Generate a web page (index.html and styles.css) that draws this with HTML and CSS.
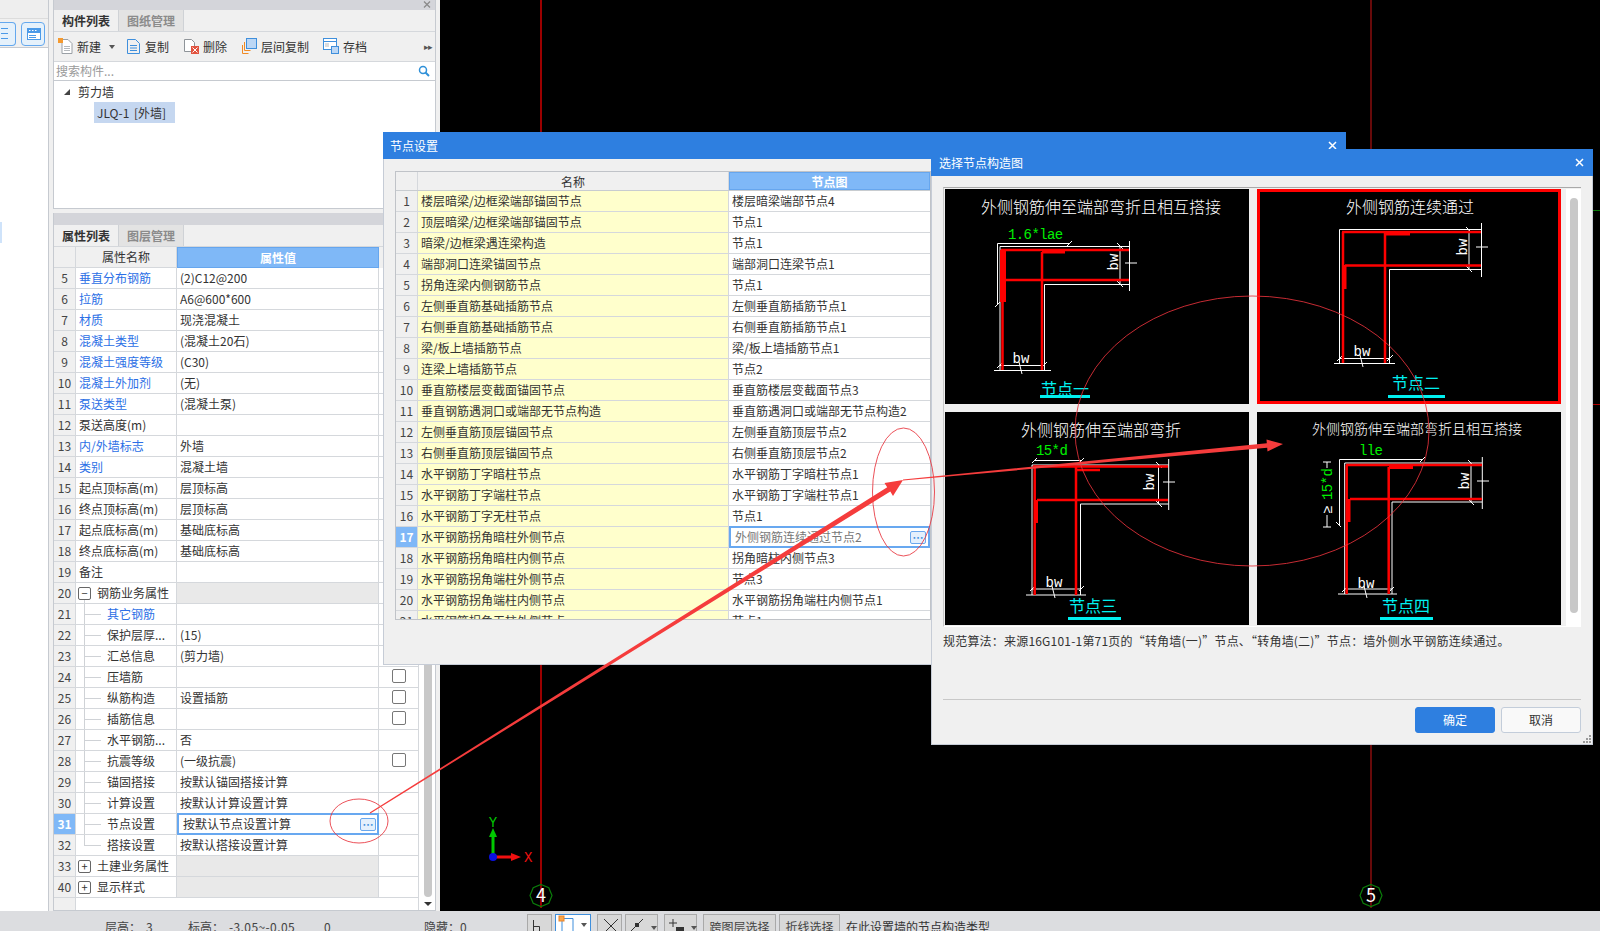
FILE: index.html
```html
<!DOCTYPE html>
<html lang="zh-CN">
<head>
<meta charset="utf-8">
<title>节点设置</title>
<link rel="stylesheet" href="styles.css">
</head>
<body>
<div class="app">
  <div class="main">
    <aside class="strip">
      <div class="strip-top"></div>
      <div class="strip-tools">
        <span class="sbtn sbtn-cut"><svg width="15" height="24" viewBox="0 0 15 24"><path class="ic-b" d="M1 5.500h7M1 10.500h7M1 15.500h7"/></svg></span>
        <span class="sbtn"><svg width="24" height="24" viewBox="0 0 24 24"><rect class="ic-fb" x="5" y="5" width="14" height="12"/><rect class="ic-fw" x="6" y="10" width="12" height="6"/><path class="ic-w" d="M7 7.500h1.500M10 7.500h1.500M13 7.500h1.500"/><path class="ic-b" d="M7 12.500h7M7 14.500h7"/></svg></span>
      </div>
      <div class="strip-body"><span class="strip-mark"></span></div>
    </aside>

    <div class="side">
      <section class="panel panel-a">
        <div class="ptitle"><svg class="pclose" width="8" height="7" viewBox="0 0 8 7"><path d="M1 0.500l6 6M7 0.500l-6 6"/></svg></div>
        <div class="tabs"><span class="tab on">构件列表</span><span class="tab">图纸管理</span></div>
        <div class="tools">
          <span class="tool t-new"><svg width="15" height="16" viewBox="0 0 15 16"><path class="ic-doc" d="M4 1.500h6l4 4v10H4z"/><path class="ic-line" d="M6 8.500h6M6 10.500h6M6 12.500h6"/><rect class="ic-or" x="0" y="0" width="5" height="5"/></svg><b>新建</b><i class="caret"></i></span>
          <span class="tool t-copy"><svg width="13" height="16" viewBox="0 0 13 16"><path class="ic-docb" d="M0.500 1.500h8l4 4v10H0.500z"/><path class="ic-docb" d="M3 7.500h7M3 10h7M3 12.500h7"/></svg><b>复制</b></span>
          <span class="tool t-del"><svg width="15" height="16" viewBox="0 0 15 16"><path class="ic-docg" d="M0.500 1.500h7l3 3v9H0.500z"/><rect class="ic-red" x="7" y="8" width="8" height="8"/><path class="ic-w" d="M8.500 9.500l5 5M13.500 9.500l-5 5"/></svg><b>删除</b></span>
          <span class="tool t-lay"><svg width="15" height="16" viewBox="0 0 15 16"><rect class="ic-sq" x="4.500" y="0.500" width="10" height="10"/><path class="ic-orl" d="M2.500 4v8.500h6M0.500 7v8.500h6"/></svg><b>层间复制</b></span>
          <span class="tool t-save"><svg width="16" height="16" viewBox="0 0 16 16"><rect class="ic-win" x="0.500" y="0.500" width="13" height="11"/><path class="ic-docb" d="M0.500 3.500h13"/><rect class="ic-sq" x="8.500" y="8.500" width="7" height="7"/><path class="ic-line" d="M2 6h4M2 8h4"/></svg><b>存档</b></span>
          <span class="more">&#9656;&#9656;</span>
        </div>
        <div class="search"><span class="ph">搜索构件...</span><svg width="12" height="12" viewBox="0 0 12 12"><circle class="ic-mag" cx="5" cy="5" r="3.500"/><path class="ic-mag2" d="M7.500 7.500l3.500 3.500"/></svg></div>
        <div class="tree">
          <div class="tree-head"><i class="tri"></i>剪力墙</div>
          <div class="tree-sel">JLQ-1 [外墙]</div>
        </div>
      </section>

      <section class="panel panel-b">
        <div class="ptitle"></div>
        <div class="tabs"><span class="tab on">属性列表</span><span class="tab">图层管理</span></div>
        <div class="pbody">
          <div class="pgrid">
            <div class="phead"><span class="n"></span><span class="k">属性名称</span><span class="v">属性值</span></div>
            <div class="prow"><span class="n">5</span><span class="k link">垂直分布钢筋</span><span class="v">(2)C12@200</span><span class="c"></span></div>
            <div class="prow"><span class="n">6</span><span class="k link">拉筋</span><span class="v">A6@600*600</span><span class="c"></span></div>
            <div class="prow"><span class="n">7</span><span class="k link">材质</span><span class="v">现浇混凝土</span><span class="c"></span></div>
            <div class="prow"><span class="n">8</span><span class="k link">混凝土类型</span><span class="v">(混凝土20石)</span><span class="c"></span></div>
            <div class="prow"><span class="n">9</span><span class="k link">混凝土强度等级</span><span class="v">(C30)</span><span class="c"></span></div>
            <div class="prow"><span class="n">10</span><span class="k link">混凝土外加剂</span><span class="v">(无)</span><span class="c"></span></div>
            <div class="prow"><span class="n">11</span><span class="k link">泵送类型</span><span class="v">(混凝土泵)</span><span class="c"></span></div>
            <div class="prow"><span class="n">12</span><span class="k">泵送高度(m)</span><span class="v"></span><span class="c"></span></div>
            <div class="prow"><span class="n">13</span><span class="k link">内/外墙标志</span><span class="v">外墙</span><span class="c"></span></div>
            <div class="prow"><span class="n">14</span><span class="k link">类别</span><span class="v">混凝土墙</span><span class="c"></span></div>
            <div class="prow"><span class="n">15</span><span class="k">起点顶标高(m)</span><span class="v">层顶标高</span><span class="c"></span></div>
            <div class="prow"><span class="n">16</span><span class="k">终点顶标高(m)</span><span class="v">层顶标高</span><span class="c"></span></div>
            <div class="prow"><span class="n">17</span><span class="k">起点底标高(m)</span><span class="v">基础底标高</span><span class="c"></span></div>
            <div class="prow"><span class="n">18</span><span class="k">终点底标高(m)</span><span class="v">基础底标高</span><span class="c"></span></div>
            <div class="prow"><span class="n">19</span><span class="k">备注</span><span class="v"></span><span class="c"></span></div>
            <div class="prow"><span class="n">20</span><span class="k grp grp-open"><i class="box">&#8722;</i>钢筋业务属性</span><span class="v gv"></span><span class="c"></span></div>
            <div class="prow"><span class="n">21</span><span class="k tr link">其它钢筋</span><span class="v"></span><span class="c"></span></div>
            <div class="prow"><span class="n">22</span><span class="k tr">保护层厚...</span><span class="v">(15)</span><span class="c"></span></div>
            <div class="prow"><span class="n">23</span><span class="k tr">汇总信息</span><span class="v">(剪力墙)</span><span class="c"></span></div>
            <div class="prow"><span class="n">24</span><span class="k tr">压墙筋</span><span class="v"></span><span class="c"><i class="cb"></i></span></div>
            <div class="prow"><span class="n">25</span><span class="k tr">纵筋构造</span><span class="v">设置插筋</span><span class="c"><i class="cb"></i></span></div>
            <div class="prow"><span class="n">26</span><span class="k tr">插筋信息</span><span class="v"></span><span class="c"><i class="cb"></i></span></div>
            <div class="prow"><span class="n">27</span><span class="k tr">水平钢筋...</span><span class="v">否</span><span class="c"></span></div>
            <div class="prow"><span class="n">28</span><span class="k tr">抗震等级</span><span class="v">(一级抗震)</span><span class="c"><i class="cb"></i></span></div>
            <div class="prow"><span class="n">29</span><span class="k tr">锚固搭接</span><span class="v">按默认锚固搭接计算</span><span class="c"></span></div>
            <div class="prow"><span class="n">30</span><span class="k tr">计算设置</span><span class="v">按默认计算设置计算</span><span class="c"></span></div>
            <div class="prow"><span class="n on">31</span><span class="k tr">节点设置</span><span class="v edit"><em>按默认节点设置计算</em><i class="dots">&#8943;</i></span><span class="c"></span></div>
            <div class="prow"><span class="n">32</span><span class="k tr tr-end">搭接设置</span><span class="v">按默认搭接设置计算</span><span class="c"></span></div>
            <div class="prow"><span class="n">33</span><span class="k grp"><i class="box">+</i>土建业务属性</span><span class="v gv"></span><span class="c"></span></div>
            <div class="prow"><span class="n">40</span><span class="k grp"><i class="box">+</i>显示样式</span><span class="v gv"></span><span class="c"></span></div>
            <div class="pfill"><span class="n"></span></div>
          </div>
          <div class="pscroll"><span class="thumb"></span><i class="down"></i></div>
        </div>
      </section>
    </div>

    <div class="canvas">
      <svg class="cad" viewBox="440 0 1160 911">
        <path class="ax" d="M541 0V908"/>
        <path class="ax2" d="M1371 0V908"/>
        <path class="frag-g" d="M1593 210.500H1600"/>
        <path class="frag-r" d="M1593 404.500H1600"/>
        <path class="bub" d="M541 884.500l7.800 3.200 3.200 7.800-3.200 7.800-7.800 3.200-7.800-3.200-3.200-7.800 3.200-7.800z"/>
        <path class="bub" d="M1371 884.500l7.800 3.200 3.200 7.800-3.200 7.800-7.800 3.200-7.800-3.200-3.200-7.800 3.200-7.800z"/>
        <text class="bubt" x="541" y="902">4</text>
        <text class="bubt" x="1371" y="902">5</text>
        <path class="yaxis" d="M493 857V836"/>
        <path class="yhead" d="M493 828l-4 9h8z"/>
        <path class="xaxis" d="M493 857H512"/>
        <path class="xhead" d="M521 857l-10-4v8z"/>
        <circle class="org" cx="493" cy="857" r="4"/>
        <text class="yt" x="493" y="827">Y</text>
        <text class="xt" x="524" y="862">X</text>
      </svg>
    </div>
  </div>

  <footer class="status">
    <span class="s1">层高：</span><span class="s2">3</span><span class="s1">标高：</span><span class="s3">-3.05~-0.05</span><span class="s4">0</span><span class="s5">隐藏：0</span>
    <span class="sb sb1"><svg width="10" height="16" viewBox="0 0 10 16"><path class="ic-k" d="M1.500 2v12M1.500 8.500h6V14"/></svg></span>
    <span class="sb sb2"><svg width="16" height="17" viewBox="0 0 16 17"><path class="ic-docb" d="M4 3.500h11V17"/><path class="ic-docb" d="M4 3.500V17"/><rect class="ic-or2" x="1" y="1" width="5" height="5"/></svg><i class="caret"></i></span>
    <span class="sb sb3"><svg width="18" height="16" viewBox="0 0 18 16"><path class="ic-k" d="M2 1l14 14M16 1L2 15"/></svg></span>
    <span class="sb sb4"><svg width="14" height="14" viewBox="0 0 14 14"><path class="ic-k" d="M1 13L13 1"/><rect class="ic-kf" x="5" y="5" width="4" height="4"/></svg><i class="caret"></i></span>
    <span class="sb sb5"><svg width="15" height="16" viewBox="0 0 15 16"><path class="ic-k" d="M4 1v8M0 5h8"/><rect class="ic-kf" x="7" y="9" width="8" height="5"/></svg><i class="caret"></i></span>
    <span class="sb sb6">跨图层选择</span>
    <span class="sb sb7">折线选择</span>
    <span class="hint">在此设置墙的节点构造类型</span>
  </footer>
</div>

<div class="dlg dlg1">
  <div class="dtitle">节点设置<svg class="dx" width="9" height="9" viewBox="0 0 9 9"><path d="M1 1l7 7M8 1L1 8"/></svg></div>
  <div class="ngrid">
    <div class="nhead"><span class="a"></span><span class="b">名称</span><span class="d">节点图</span></div>
    <div class="nrow"><span class="a">1</span><span class="b">楼层暗梁/边框梁端部锚固节点</span><span class="d">楼层暗梁端部节点4</span></div>
    <div class="nrow"><span class="a">2</span><span class="b">顶层暗梁/边框梁端部锚固节点</span><span class="d">节点1</span></div>
    <div class="nrow"><span class="a">3</span><span class="b">暗梁/边框梁遇连梁构造</span><span class="d">节点1</span></div>
    <div class="nrow"><span class="a">4</span><span class="b">端部洞口连梁锚固节点</span><span class="d">端部洞口连梁节点1</span></div>
    <div class="nrow"><span class="a">5</span><span class="b">拐角连梁内侧钢筋节点</span><span class="d">节点1</span></div>
    <div class="nrow"><span class="a">6</span><span class="b">左侧垂直筋基础插筋节点</span><span class="d">左侧垂直筋插筋节点1</span></div>
    <div class="nrow"><span class="a">7</span><span class="b">右侧垂直筋基础插筋节点</span><span class="d">右侧垂直筋插筋节点1</span></div>
    <div class="nrow"><span class="a">8</span><span class="b">梁/板上墙插筋节点</span><span class="d">梁/板上墙插筋节点1</span></div>
    <div class="nrow"><span class="a">9</span><span class="b">连梁上墙插筋节点</span><span class="d">节点2</span></div>
    <div class="nrow"><span class="a">10</span><span class="b">垂直筋楼层变截面锚固节点</span><span class="d">垂直筋楼层变截面节点3</span></div>
    <div class="nrow"><span class="a">11</span><span class="b">垂直钢筋遇洞口或端部无节点构造</span><span class="d">垂直筋遇洞口或端部无节点构造2</span></div>
    <div class="nrow"><span class="a">12</span><span class="b">左侧垂直筋顶层锚固节点</span><span class="d">左侧垂直筋顶层节点2</span></div>
    <div class="nrow"><span class="a">13</span><span class="b">右侧垂直筋顶层锚固节点</span><span class="d">右侧垂直筋顶层节点2</span></div>
    <div class="nrow"><span class="a">14</span><span class="b">水平钢筋丁字暗柱节点</span><span class="d">水平钢筋丁字暗柱节点1</span></div>
    <div class="nrow"><span class="a">15</span><span class="b">水平钢筋丁字端柱节点</span><span class="d">水平钢筋丁字端柱节点1</span></div>
    <div class="nrow"><span class="a">16</span><span class="b">水平钢筋丁字无柱节点</span><span class="d">节点1</span></div>
    <div class="nrow"><span class="a on">17</span><span class="b">水平钢筋拐角暗柱外侧节点</span><span class="d edit2"><em>外侧钢筋连续通过节点2</em><i class="dots">&#8943;</i></span></div>
    <div class="nrow"><span class="a">18</span><span class="b">水平钢筋拐角暗柱内侧节点</span><span class="d">拐角暗柱内侧节点3</span></div>
    <div class="nrow"><span class="a">19</span><span class="b">水平钢筋拐角端柱外侧节点</span><span class="d">节点3</span></div>
    <div class="nrow"><span class="a">20</span><span class="b">水平钢筋拐角端柱内侧节点</span><span class="d">水平钢筋拐角端柱内侧节点1</span></div>
    <div class="nrow"><span class="a">21</span><span class="b">水平钢筋拐角无柱外侧节点</span><span class="d">节点1</span></div>
  </div>
</div>

<div class="dlg dlg2">
  <div class="dtitle">选择节点构造图<svg class="dx" width="9" height="9" viewBox="0 0 9 9"><path d="M1 1l7 7M8 1L1 8"/></svg></div>
  <div class="dbody">
    <div class="gallery">
      <div class="cells">
        <div class="cell">
          <svg class="dwg" viewBox="945 189 304 215">
            <text class="ti" x="1101" y="213">外侧钢筋伸至端部弯折且相互搭接</text>
            <text class="gr" x="1008" y="239">1.6*lae</text>
            <path class="wl" d="M997.500 305V243.500H1070M1000 370V246.500H1129M1129 284.500H1044.500V370M994 370.500H1051M1000 365.500H1044M1120 246V284M1129.500 241V291M1067 246l5-5M995 307l5-5M997 368l5-5M1041 368l6-6M1117 243l6 6M1117 281l6 6M1019 362l3 12M1125 263h12"/>
            <path class="rd" d="M1001 250H1129M1005 280H1129M1002.500 250V370M1042 252V370"/>
            <path class="rf" d="M1000 250h6v52h-6zM1042 250h23v3.500h-23z"/>
            <text class="bw" x="1021" y="363">bw</text>
            <text class="bw" transform="translate(1118 262) rotate(-90)">bw</text>
            <text class="cy" x="1065" y="395">节点一</text>
            <rect class="cyb" x="1040" y="395" width="50" height="3"/>
          </svg>
        </div>
        <div class="cell sel">
          <svg class="dwg" viewBox="1257 189 304 215">
            <text class="ti" x="1410" y="213">外侧钢筋连续通过</text>
            <path class="wl" d="M1339.500 363V229.500H1481M1481 269.500H1389.500V363M1334 363.500H1395M1340 358.500H1390M1469 230V269M1481.500 223V277M1337 361l5-5M1387 361l6-6M1466 227l6 6M1466 266l6 6M1360 355l3 12M1476 247h12"/>
            <path class="rd" d="M1342 232H1481M1345 265.500H1481M1343 232V363M1385 233V363"/>
            <path class="rf" d="M1343 265h3.500v24h-3.500zM1385 232h25v3.500h-25z"/>
            <text class="bw" x="1362" y="356">bw</text>
            <text class="bw" transform="translate(1467 247) rotate(-90)">bw</text>
            <text class="cy" x="1416" y="389">节点二</text>
            <rect class="cyb" x="1388" y="395" width="57" height="3"/>
          </svg>
        </div>
        <div class="cell">
          <svg class="dwg" viewBox="945 412 304 213">
            <text class="ti" x="1101" y="436">外侧钢筋伸至端部弯折</text>
            <text class="gr" x="1036" y="455">15*d</text>
            <path class="wl" d="M1032 595V465H1168.500M1168.500 504H1080.500V595M1034 460.500H1081M1026 595H1086M1032 589H1081M1158.500 465V504M1168.700 459V510M1032 463l5-5M1079 463l5-5M1030 591l5-5M1079 591l5-5M1156 462l6 6M1156 501l6 6M1052 586l3 12M1163 482h12"/>
            <path class="rd" d="M1033 466.500H1168M1037 500H1168M1034.700 466V595M1076 467V595M1076 470H1100"/>
            <path class="rf" d="M1034 500h4v23h-4z"/>
            <text class="bw" x="1054" y="587">bw</text>
            <text class="bw" transform="translate(1154 482) rotate(-90)">bw</text>
            <text class="cy" x="1093" y="612">节点三</text>
            <rect class="cyb" x="1068" y="617" width="53" height="3"/>
          </svg>
        </div>
        <div class="cell">
          <svg class="dwg" viewBox="1257 412 304 213">
            <text class="ti ti14" x="1417" y="434">外侧钢筋伸至端部弯折且相互搭接</text>
            <text class="gr" x="1359" y="455">lle</text>
            <text class="gr" transform="translate(1332 500) rotate(-90)">15*d</text>
            <text class="wt" transform="translate(1332 514) rotate(-90)">&#8805;</text>
            <path class="wl" d="M1339.500 525V459.500H1423M1344.700 594V463H1482M1482 502H1392V594M1338 594H1397M1344 589H1392M1471 463V502M1482.300 457V509M1420 462l5-5M1336 522l5 5M1342 592l5-5M1389 592l5-5M1468 460l6 6M1468 499l6 6M1364 586l3 12M1477 481h12M1327 515V527M1323 527h8M1323 462h8M1327 462v6"/>
            <path class="rd" d="M1346 465H1482M1350 499H1482M1346.700 465V594M1388.700 467V594"/>
            <path class="rf" d="M1347 499h3.500v23h-3.500zM1389 465h24v4h-24z"/>
            <text class="bw" x="1366" y="588">bw</text>
            <text class="bw" transform="translate(1469 481) rotate(-90)">bw</text>
            <text class="cy" x="1406" y="612">节点四</text>
            <rect class="cyb" x="1380" y="617" width="53" height="3"/>
          </svg>
        </div>
      </div>
      <div class="gscroll"><span class="gthumb"></span></div>
    </div>
    <p class="note">规范算法：来源16G101-1第71页的“转角墙(一)”节点、“转角墙(二)”节点：墙外侧水平钢筋连续通过。</p>
    <div class="foot">
      <span class="btn ok">确定</span><span class="btn">取消</span>
    </div>
    <svg class="grip" width="8" height="8" viewBox="0 0 8 8"><path d="M6 0h2v2H6zM3 3h2v2H3zM6 3h2v2H6zM0 6h2v2H0zM3 6h2v2H3zM6 6h2v2H6z"/></svg>
  </div>
</div>

<svg class="marks" viewBox="0 0 1600 931">
  <ellipse class="ring" cx="359" cy="821" rx="29" ry="22"/>
  <ellipse class="ring" cx="903.500" cy="492" rx="31" ry="64"/>
  <ellipse class="ring" cx="1252" cy="431" rx="177" ry="135"/>
  <polygon class="arrow" points="370.300,813.500 890.300,491.500 893,496 903,480 884.500,483 887.200,487.300 369.700,812.500"/>
  <polygon class="arrow" points="903,480.500 1267.200,447.700 1267.500,451.500 1283,444 1266.500,439.500 1266.800,443.300 903,479.500"/>
</svg>
</body>
</html>
```

FILE: styles.css
```css
* { box-sizing: border-box; }
html, body { margin: 0; padding: 0; width: 1600px; height: 931px; overflow: hidden; }
body {
  position: relative;
  background: #f0f0f0;
  color: #333;
  font: 12px/20px "Noto Sans CJK SC", "Liberation Sans", sans-serif;
}
i, em, b { font-style: normal; font-weight: normal; }
svg { display: block; flex: none; }

.app { display: flex; flex-direction: column; height: 931px; }
.main { display: flex; height: 911px; }

/* left strip */
.strip { width: 49px; background: #fff; border-right: 1px solid #c6cad0; display: flex; flex-direction: column; flex: none; }
.strip-top { height: 19px; background: #eeeeee; border-bottom: 1px solid #dcdcdc; }
.strip-tools { height: 29px; background: #f0f0f0; border-bottom: 1px solid #c6cad0; padding-top: 3px; display: flex; gap: 5px; justify-content: flex-end; padding-right: 3px; }
.sbtn { display: block; width: 25px; height: 24px; border: 1px solid #64a8ee; border-radius: 4px; background: #e5f1fb; overflow: hidden; }
.sbtn-cut { width: 16px; border-left: 0; border-radius: 0 4px 4px 0; }
.strip-body { flex: 1; padding-top: 174px; }
.strip-mark { display: block; width: 2px; height: 21px; background: #cfe3fa; }

.ic-b { stroke: #4b9ae8; fill: none; stroke-width: 1; }
.ic-fb { fill: #4b9ae8; }
.ic-fw { fill: #fff; }
.ic-w { stroke: #fff; fill: none; stroke-width: 1; }
.ic-doc { fill: #fff; stroke: #9aa0a6; }
.ic-line { stroke: #b5b9bd; fill: none; }
.ic-or { fill: #f59a2f; }
.ic-docb { fill: none; stroke: #3f8fdc; }
.ic-docg { fill: #fff; stroke: #8f9499; }
.ic-red { fill: #e2533f; }
.ic-sq { fill: #bcd7f5; stroke: #3f8fdc; }
.ic-orl { fill: none; stroke: #f08a24; }
.ic-win { fill: #fff; stroke: #3f8fdc; }
.ic-mag { fill: none; stroke: #2f90d8; stroke-width: 1.500; }
.ic-mag2 { fill: none; stroke: #2f90d8; stroke-width: 2; }
.ic-k { fill: none; stroke: #333; }
.ic-kf { fill: #333; }
.ic-or2 { fill: #f9a64a; stroke: #e8832a; }

/* side panels */
.side { width: 391px; flex: none; padding: 0 4px; background: #f0f0f0; display: flex; flex-direction: column; gap: 4px; }
.panel { border: 1px solid #c6cad0; border-top: 0; display: flex; flex-direction: column; background: #f0f0f0; }
.panel-a { height: 209px; }
.panel-b { height: 698px; }
.ptitle { height: 10px; background: #d4d5da; display: flex; justify-content: flex-end; padding: 1px 4px 0 0; flex: none; }
.panel-b .ptitle { height: 12px; }
.pclose path { stroke: #8a8a8a; fill: none; stroke-width: 1.300; }
.tabs { height: 22px; display: flex; background: #f0f0f0; border-bottom: 1px solid #d5d8dc; flex: none; }
.tab { width: 65px; text-align: center; line-height: 21px; font-weight: bold; color: #8b8b8b; background: #e3e3e3; border-right: 1px solid #cfd2d6; }
.tab.on { color: #333; background: #f0f0f0; }

.tools { height: 30px; display: flex; align-items: center; background: #f0f0f0; border-bottom: 1px solid #d5d8dc; flex: none; }
.tool { display: flex; align-items: center; gap: 4px; color: #333; }
.tool svg { margin-top: -1px; }
.t-new { margin-left: 4px; }
.t-copy { margin-left: 12px; gap: 5px; }
.t-del { margin-left: 15px; }
.t-lay { margin-left: 15px; }
.t-save { margin-left: 14px; }
.caret { display: block; width: 0; height: 0; border: 3px solid transparent; border-top: 4px solid #555; border-bottom: 0; margin-left: 4px; }
.more { margin-left: auto; margin-right: 3px; font-size: 9px; letter-spacing: -1px; color: #555; }
.search { height: 19px; background: #fff; border-bottom: 1px solid #c6cad0; display: flex; align-items: center; justify-content: space-between; padding: 0 5px 0 2px; flex: none; }
.ph { color: #9a9a9a; }
.tree { flex: 1; background: #fff; padding: 0 0 0 10px; }
.tree-head { display: flex; align-items: center; height: 21px; }
.tri { display: block; width: 0; height: 0; border-left: 6px solid transparent; border-bottom: 6px solid #444; margin-right: 8px; }
.tree-sel { margin-left: 30px; width: 81px; height: 21px; line-height: 21px; background: #c5d7f0; padding-left: 3px; white-space: nowrap; word-spacing: 2px; }

/* property grid */
.pbody { flex: 1; display: flex; min-height: 0; background: #fff; }
.pgrid { width: 365px; flex: none; display: flex; flex-direction: column; border-right: 1px solid #d5d8dc; }
.phead, .prow { display: flex; height: 21px; flex: none; line-height: 20px; }
.phead { background: #f0f0f0; }
.prow { border-bottom: 1px solid #d5d8dc; background: #fff; }
.n { width: 22px; flex: none; text-align: center; background: #f0f0f0; border-right: 1px solid #d5d8dc; color: #444; }
.n.on { background: #7fb8f7; color: #fff; font-weight: bold; }
.k { width: 101px; flex: none; padding-left: 3px; border-right: 1px solid #d5d8dc; white-space: nowrap; }
.v { width: 202px; flex: none; padding-left: 3px; border-right: 1px solid #d5d8dc; white-space: nowrap; }
.c { flex: 1; display: flex; align-items: center; justify-content: center; padding-bottom: 3px; }
.phead .k { text-align: center; padding-left: 0; border-bottom: 1px solid #d5d8dc; }
.phead .n { border-bottom: 1px solid #d5d8dc; }
.phead .v { width: 202px; text-align: center; background: #7fb8f7; color: #fff; font-weight: bold; border: 1px solid #66a6ee; padding-left: 0; }
.link { color: #2b6fe6; }
.gv { background: #e9e9e9; }
.grp { display: flex; align-items: center; padding-left: 2px; gap: 6px; }
.grp-open { background: linear-gradient(#cfd2d6, #cfd2d6) 8px 14px / 1px 7px no-repeat; }
.box { width: 13px; height: 13px; border: 1px solid #666; border-radius: 2px; background: #fff; display: flex; align-items: center; justify-content: center; font-size: 11px; line-height: 11px; color: #333; flex: none; }
.tr {
  padding-left: 31px;
  background:
    linear-gradient(#cfd2d6, #cfd2d6) 8px 0 / 1px 100% no-repeat,
    linear-gradient(#cfd2d6, #cfd2d6) 8px 10px / 17px 1px no-repeat;
}
.tr-end {
  background:
    linear-gradient(#cfd2d6, #cfd2d6) 8px 0 / 1px 11px no-repeat,
    linear-gradient(#cfd2d6, #cfd2d6) 8px 10px / 17px 1px no-repeat;
}
.cb { display: block; width: 14px; height: 14px; border: 1px solid #777; border-radius: 2px; background: #fff; }
.edit { border: 2px solid #68a8f0; margin-top: -1px; height: 22px; display: flex; justify-content: space-between; align-items: center; padding: 0 1px 0 4px; }
.edit em { font-style: normal; }
.dots { display: flex; align-items: center; justify-content: center; width: 16px; height: 13px; border: 1px solid #6aa8ee; border-radius: 2px; background: #e4f0fc; color: #3f8fdc; font-size: 11px; line-height: 11px; font-weight: bold; }
.pfill { flex: 1; display: flex; }
.pscroll { flex: 1; background: #fff; display: flex; flex-direction: column; align-items: center; justify-content: flex-end; padding: 0 0 4px 1px; }
.thumb { display: block; width: 8px; height: 600px; background: #c8c8c8; border-radius: 0 0 4px 4px; margin-bottom: 5px; }
.down { display: block; width: 0; height: 0; border: 4px solid transparent; border-top: 4px solid #333; border-bottom: 0; }

/* canvas */
.canvas { flex: 1; background: #000; }
.cad { width: 1160px; height: 911px; }
.ax { stroke: #f00000; stroke-width: 1.300; fill: none; }
.ax2 { stroke: #a01010; stroke-width: 1.300; fill: none; }
.frag-g { stroke: #0a7a0a; fill: none; }
.frag-r { stroke: #b00000; fill: none; }
.bub { fill: none; stroke: #0a7d0a; stroke-width: 1.200; }
.bubt { fill: #fff; font-size: 18px; text-anchor: middle; }
.yaxis { stroke: #00c800; stroke-width: 3; fill: none; }
.yhead { fill: #00c800; }
.xaxis { stroke: #f01010; stroke-width: 3; fill: none; }
.xhead { fill: #f01010; }
.org { fill: #0a10e0; }
.yt { fill: #00c800; font-size: 14px; text-anchor: middle; font-family: "Liberation Mono", monospace; }
.xt { fill: #f01010; font-size: 14px; font-family: "Liberation Mono", monospace; }

/* status */
.status { height: 20px; background: #dcdde0; display: flex; padding: 3px 0 0 105px; overflow: hidden; line-height: 25px; color: #444; flex: none; }
.s1 { width: 41px; flex: none; }
.s2 { width: 42px; flex: none; }
.s3 { width: 95px; flex: none; letter-spacing: 0.4px; white-space: nowrap; }
.s4 { width: 100px; flex: none; }
.s5 { width: 103px; flex: none; }
.sb { height: 26px; flex: none; background: #d8d8d8; border: 1px solid #a9a9a9; margin-right: 3px; display: flex; align-items: flex-start; padding: 3px 0 0 4px; gap: 3px; }
.sb .caret { margin: 8px 0 0 4px; }
.sb1 { width: 25px; }
.sb2 { width: 36px; background: #fff; border: 1px solid #3f8fdc; margin-right: 6px; padding: 0 0 0 2px; }
.sb3 { width: 25px; }
.sb4 { width: 33px; margin-right: 6px; }
.sb5 { width: 33px; margin-right: 6px; }
.sb6 { width: 73px; padding: 0; justify-content: center; line-height: 23px; }
.sb7 { width: 61px; padding: 0; justify-content: center; line-height: 23px; margin-right: 6px; }
.hint { color: #333; }

/* dialogs */
.dlg { position: absolute; background: #f0f0f0; border: 1px solid #c6ccd6; border-top: 0; }
.dtitle { height: 27px; margin: 0 -1px; background: #2e7fe0; color: #fff; line-height: 27px; padding-left: 8px; display: flex; align-items: center; justify-content: space-between; padding-right: 9px; }
.dlg1 { left: 383px; top: 132px; width: 963px; height: 533px; }
.dlg1 .dtitle { padding-left: 7px; padding-bottom: 1px; }
.dx path { stroke: #fff; stroke-width: 1.500; fill: none; }
.dlg2 { left: 931px; top: 149px; width: 662px; height: 596px; }

.ngrid { margin: 12px 0 0 11px; width: 536px; height: 449px; border: 1px solid #c0c3c8; overflow: hidden; background: #fff; }
.nhead, .nrow { display: flex; height: 21px; line-height: 20px; }
.nhead { height: 19px; line-height: 19px; background: #f0f0f0; border-bottom: 1px solid #c8ccd0; }
.nrow { border-bottom: 1px solid #d5d8dc; }
.a { width: 22px; flex: none; text-align: center; background: #f0f0f0; border-right: 1px solid #d5d8dc; color: #444; }
.a.on { background: #7fb8f7; color: #fff; font-weight: bold; }
.b { width: 311px; flex: none; padding-left: 3px; background: #ffffcc; border-right: 1px solid #d5d8dc; white-space: nowrap; }
.d { flex: 1; padding-left: 3px; white-space: nowrap; }
.nhead .b { background: #f0f0f0; text-align: center; padding-left: 0; }
.nhead .d { background: #7fb8f7; color: #fff; text-align: center; font-weight: bold; border: 1px solid #66a6ee; padding-left: 0; line-height: 17px; }
.edit2 { border: 2px solid #68a8f0; margin-top: -1px; height: 22px; display: flex; align-items: center; justify-content: space-between; padding: 0 2px 0 4px; color: #777; }

.dbody { padding: 11px 11px 0; position: relative; }
.gallery { width: 638px; height: 440px; border-top: 1px solid #a9a9a9; border-left: 1px solid #c8c8c8; border-bottom: 1px solid #fff; display: flex; padding: 1px 0 0 1px; }
.cells { display: grid; grid-template-columns: 304px 304px; grid-template-rows: 215px 213px; gap: 8px; flex: none; }
.cell { background: #000; overflow: hidden; }
.cell.sel { outline: 3px solid #f00; outline-offset: -3px; }
.dwg { width: 100%; height: 100%; }
.gscroll { width: 15px; margin-left: 5px; height: 437px; background: #fff; padding: 9px 3px 0 4px; }
.gthumb { display: block; width: 8px; height: 415px; background: #c8c8c8; border-radius: 4px; }
.note { margin: 4px 0 0; height: 20px; white-space: nowrap; color: #333; letter-spacing: 0.2px; }
.foot { margin-top: 48px; width: 638px; border-top: 1px solid #c8c8c8; padding-top: 7px; display: flex; justify-content: flex-end; gap: 6px; }
.btn { width: 80px; height: 26px; border: 1px solid #c3cdda; border-radius: 3px; background: #f9f9f9; text-align: center; line-height: 24px; }
.btn.ok { background: #2e7fe0; border-color: #2e7fe0; color: #fff; }
.grip { position: absolute; right: 1px; bottom: -10px; }
.grip path { fill: #9a9a9a; }

/* drawing */
.ti { fill: #fff; font-size: 16px; text-anchor: middle; font-weight: 300; }
.ti14 { font-size: 14px; }
.gr { fill: #00f000; font: 14px "Liberation Mono", monospace; letter-spacing: -0.600px; }
.bw { fill: #fff; font: 14px "Liberation Mono", monospace; text-anchor: middle; }
.wt { fill: #fff; font: 14px "Liberation Mono", monospace; }
.cy { fill: #00f0f0; font-size: 16px; text-anchor: middle; }
.cyb { fill: #00f0f0; }
.wl { stroke: #fff; stroke-width: 1; fill: none; }
.rd { stroke: #f00; stroke-width: 2.500; fill: none; }
.rf { fill: #f00; }

/* annotation overlay */
.marks { position: absolute; left: 0; top: 0; width: 1600px; height: 931px; pointer-events: none; }
.ring { fill: none; stroke: #e8323c; stroke-width: 1; opacity: 0.85; }
.arrow { fill: #f53c3c; }
```
